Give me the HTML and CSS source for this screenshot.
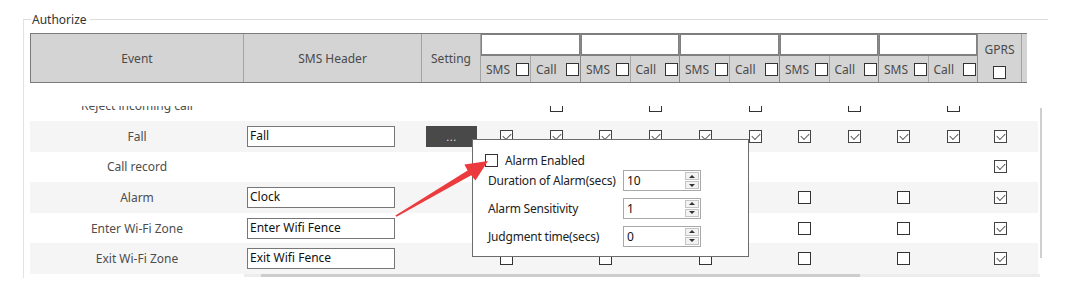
FILE: index.html
```html
<!DOCTYPE html>
<html>
<head>
<meta charset="utf-8">
<link rel="stylesheet" href="styles.css">
</head>
<body>
<div class="page">
  <div class="fieldset">
    <div class="legend">Authorize</div>
    <div class="thead">
      <div class="hc">Event</div>
      <div class="hc">SMS Header</div>
      <div class="hc">Setting</div>
      <div class="hgroup"><div class="hbox"></div><div class="hsub"><div class="hsc"><span>SMS</span><i class="cb"></i></div><div class="hsc"><span>Call</span><i class="cb"></i></div></div></div>
      <div class="hgroup"><div class="hbox"></div><div class="hsub"><div class="hsc"><span>SMS</span><i class="cb"></i></div><div class="hsc"><span>Call</span><i class="cb"></i></div></div></div>
      <div class="hgroup"><div class="hbox"></div><div class="hsub"><div class="hsc"><span>SMS</span><i class="cb"></i></div><div class="hsc"><span>Call</span><i class="cb"></i></div></div></div>
      <div class="hgroup"><div class="hbox"></div><div class="hsub"><div class="hsc"><span>SMS</span><i class="cb"></i></div><div class="hsc"><span>Call</span><i class="cb"></i></div></div></div>
      <div class="hgroup"><div class="hbox"></div><div class="hsub"><div class="hsc"><span>SMS</span><i class="cb"></i></div><div class="hsc"><span>Call</span><i class="cb"></i></div></div></div>
      <div class="hc gprs"><span>GPRS</span><i class="cb"></i></div>
      <div class="hc hlast"></div>
    </div>

    <div class="bodywrap">
      <div class="viewport">
        <div class="rows">
          <div class="row">
            <div class="c ev">Reject incoming call</div>
            <div class="c"></div>
            <div class="c"></div>
            <div class="c"></div><div class="c k"><i class="cb"></i></div>
            <div class="c"></div><div class="c k"><i class="cb"></i></div>
            <div class="c"></div><div class="c k"><i class="cb"></i></div>
            <div class="c"></div><div class="c k"><i class="cb"></i></div>
            <div class="c"></div><div class="c k"><i class="cb"></i></div>
            <div class="c"></div>
            <div class="c"></div>
          </div>
          <div class="row alt">
            <div class="c ev">Fall</div>
            <div class="c hd"><div class="inp">Fall</div></div>
            <div class="c st"><div class="btn">...</div></div>
            <div class="c k"><i class="cb on"></i></div><div class="c k"><i class="cb on"></i></div>
            <div class="c k"><i class="cb on"></i></div><div class="c k"><i class="cb on"></i></div>
            <div class="c k"><i class="cb on"></i></div><div class="c k"><i class="cb on"></i></div>
            <div class="c k"><i class="cb on"></i></div><div class="c k"><i class="cb on"></i></div>
            <div class="c k"><i class="cb on"></i></div><div class="c k"><i class="cb on"></i></div>
            <div class="c k"><i class="cb on"></i></div>
            <div class="c"></div>
          </div>
          <div class="row">
            <div class="c ev">Call record</div>
            <div class="c"></div>
            <div class="c"></div>
            <div class="c"></div><div class="c"></div><div class="c"></div><div class="c"></div><div class="c"></div>
            <div class="c"></div><div class="c"></div><div class="c"></div><div class="c"></div><div class="c"></div>
            <div class="c k"><i class="cb on"></i></div>
            <div class="c"></div>
          </div>
          <div class="row alt">
            <div class="c ev">Alarm</div>
            <div class="c hd"><div class="inp">Clock</div></div>
            <div class="c"></div>
            <div class="c k"><i class="cb"></i></div><div class="c"></div>
            <div class="c k"><i class="cb"></i></div><div class="c"></div>
            <div class="c k"><i class="cb"></i></div><div class="c"></div>
            <div class="c k"><i class="cb"></i></div><div class="c"></div>
            <div class="c k"><i class="cb"></i></div><div class="c"></div>
            <div class="c k"><i class="cb on"></i></div>
            <div class="c"></div>
          </div>
          <div class="row">
            <div class="c ev">Enter Wi-Fi Zone</div>
            <div class="c hd"><div class="inp">Enter Wifi Fence</div></div>
            <div class="c"></div>
            <div class="c k"><i class="cb"></i></div><div class="c"></div>
            <div class="c k"><i class="cb"></i></div><div class="c"></div>
            <div class="c k"><i class="cb"></i></div><div class="c"></div>
            <div class="c k"><i class="cb"></i></div><div class="c"></div>
            <div class="c k"><i class="cb"></i></div><div class="c"></div>
            <div class="c k"><i class="cb on"></i></div>
            <div class="c"></div>
          </div>
          <div class="row alt">
            <div class="c ev">Exit Wi-Fi Zone</div>
            <div class="c hd"><div class="inp">Exit Wifi Fence</div></div>
            <div class="c"></div>
            <div class="c k"><i class="cb"></i></div><div class="c"></div>
            <div class="c k"><i class="cb"></i></div><div class="c"></div>
            <div class="c k"><i class="cb"></i></div><div class="c"></div>
            <div class="c k"><i class="cb"></i></div><div class="c"></div>
            <div class="c k"><i class="cb"></i></div><div class="c"></div>
            <div class="c k"><i class="cb on"></i></div>
            <div class="c"></div>
          </div>
        </div>
      </div>
      <div class="vscroll"></div>
    </div>
    <div class="hscroll"><div class="thumb"></div></div>
  </div>

  <div class="popup">
    <div class="prow-check"><i class="cb"></i><span>Alarm Enabled</span></div>
    <div class="pgrid">
      <div class="plabel">Duration of Alarm(secs)</div>
      <div class="spin"><span class="val">10</span><div class="spbtns"><div class="spb"><i class="up"></i></div><div class="spb"><i class="dn"></i></div></div></div>
      <div class="plabel">Alarm Sensitivity</div>
      <div class="spin"><span class="val">1</span><div class="spbtns"><div class="spb"><i class="up"></i></div><div class="spb"><i class="dn"></i></div></div></div>
      <div class="plabel">Judgment time(secs)</div>
      <div class="spin"><span class="val">0</span><div class="spbtns"><div class="spb"><i class="up"></i></div><div class="spb"><i class="dn"></i></div></div></div>
    </div>
  </div>

  <svg class="arrow" width="1080" height="289" viewBox="0 0 1080 289">
    <polygon points="395.4,215.4 467.6,170.4 464.4,164.4 488,161 475.4,180.6 471.2,175.2 396.6,216.8" fill="#ec3b3f"/>
  </svg>
</div>
</body>
</html>
```

FILE: styles.css
```css
* { box-sizing: border-box; }
html, body { margin: 0; padding: 0; background: #fff; }
body {
  font-family: "Noto Sans", "Open Sans", sans-serif;
  font-size: 12px;
  color: #444;
  width: 1080px;
  height: 289px;
  overflow: hidden;
}
.page { position: relative; width: 1080px; height: 289px; padding-top: 19px; }

.fieldset {
  margin-left: 23px;
  width: 1025px;
  height: 259px;
  border-top: 1px solid #dcdcdc;
  border-left: 1px solid #e2e2e2;
  padding-left: 6px;
}
.legend {
  display: block;
  width: max-content;
  margin-top: -8px;
  margin-left: 1px;
  padding: 0 3px 0 1px;
  background: #fff;
  line-height: 16px;
  height: 16px;
  color: #333;
}

/* header */
.thead {
  margin-top: 5px;
  display: grid;
  grid-template-columns: 213px 178px 59px 100px 99px 100px 99px 99px 44px 5px;
  height: 50px;
  background: #d4d4d4;
  border-top: 1px solid #7b7b7b;
  border-bottom: 1px solid #7b7b7b;
  border-left: 1px solid #7b7b7b;
  width: 997px;
}
.hc {
  display: flex;
  align-items: center;
  justify-content: center;
  border-right: 1px solid #a3a3a3;
  color: #4a4a4a;
}
.hlast { border-right: none; }
.hc.gprs {
  flex-direction: column;
  justify-content: flex-start;
  padding-top: 9px;
  gap: 9px;
  line-height: 14px;
}
.hgroup {
  display: flex;
  flex-direction: column;
  border-right: 1px solid #8a8a8a;
}
.hbox {
  height: 22px;
  background: #fff;
  border: 1px solid #808080;
  border-width: 1px 1px 2px 1px;
}
.hsub { flex: 1; display: flex; }
.hsc {
  flex: 1;
  display: flex;
  align-items: center;
  justify-content: space-between;
  padding: 1px 1px 0 5px;
  color: #4a4a4a;
}
.hsc + .hsc { border-left: 1px solid #a8a8a8; }

/* checkbox */
.cb {
  position: relative;
  display: block;
  width: 13px;
  height: 13px;
  background: #fff;
  border: 1px solid #333;
  flex: none;
}
.cb.on { border-color: #444; }
.cb.on::after {
  content: "";
  position: absolute;
  left: 2px;
  top: 2px;
  width: 7px;
  height: 4px;
  border-left: 1.4px solid #5a5a5a;
  border-bottom: 1.4px solid #5a5a5a;
  transform: rotate(-45deg);
}

/* body */
.bodywrap {
  display: flex;
  margin-top: 23px;
  gap: 2px;
}
.viewport {
  width: 1008px;
  height: 168px;
  overflow: hidden;
}
.rows { margin-top: -15.6px; }
.row {
  display: grid;
  grid-template-columns: 214px 178px 59px 50px 50px 49.5px 49.5px 50px 50px 49.5px 49.5px 49.5px 49.5px 44px 16px;
  height: 30.6px;
  background: #fff;
}
.row.alt { background: #f5f5f5; }
.c { display: flex; align-items: center; }
.c.ev { justify-content: center; color: #4d4d4d; }
.c.k { justify-content: center; }
.c.hd { padding-left: 3px; }
.inp {
  width: 148px;
  height: 21px;
  border: 1px solid #777;
  background: #fff;
  color: #111;
  padding-left: 2px;
  line-height: 18px;
}
.c.st { padding-left: 4px; }
.btn {
  width: 51px;
  height: 21px;
  background: #494949;
  color: #ddd;
  text-align: center;
  line-height: 22px;
  font-size: 11px;
  letter-spacing: 0.5px;
}
.vscroll {
  width: 2px;
  height: 150px;
  margin-top: 2px;
  background: #cfcfcf;
}
.hscroll {
  margin-left: 214px;
  width: 796px;
  height: 3px;
  background: #ececec;
}
.hscroll .thumb {
  margin-left: 17px;
  width: 599px;
  height: 3px;
  background: #cdcdcd;
}

/* popup */
.popup {
  position: absolute;
  left: 472px;
  top: 139px;
  width: 277px;
  height: 118px;
  background: #fff;
  border: 1px solid #6c6c6c;
  padding: 14px 0 0 12px;
  color: #222;
  letter-spacing: -0.2px;
}
.prow-check {
  display: flex;
  align-items: center;
  gap: 7px;
  height: 13px;
  line-height: 14px;
}
.prow-check .cb { border-color: #333; }
.pgrid {
  margin-top: 3px;
  padding-left: 3px;
  display: grid;
  grid-template-columns: 135px 78px;
  grid-auto-rows: 21px;
  row-gap: 6.8px;
}
.plabel { display: flex; align-items: center; }
.spin {
  display: flex;
  justify-content: space-between;
  align-items: stretch;
  border: 1px solid #a8a8a8;
  padding: 1px;
  background: #fff;
}
.spin .val { padding-left: 2px; line-height: 17px; color: #111; }
.spbtns { width: 14px; display: flex; flex-direction: column; gap: 1px; }
.spb {
  flex: 1;
  background: #f2f2f2;
  border: 1px solid #c4c4c4;
  display: flex;
  align-items: center;
  justify-content: center;
}
.up, .dn { display: block; width: 0; height: 0; border-left: 3px solid transparent; border-right: 3px solid transparent; }
.up { border-bottom: 3px solid #333; }
.dn { border-top: 3px solid #333; }

.arrow { position: absolute; left: 0; top: 0; pointer-events: none; }
```
